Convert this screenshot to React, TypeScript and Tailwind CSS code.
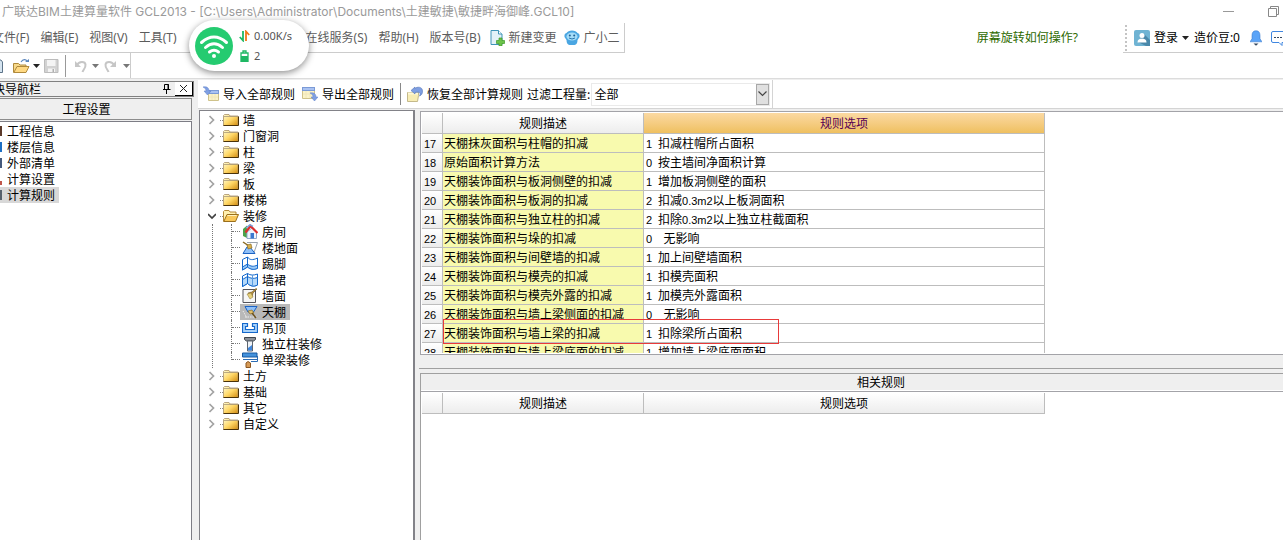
import { useState } from 'react';
import type { ReactNode } from 'react';
import clsx from 'clsx';

const TITLE_FONT = "font-['Inter','Noto_Sans_CJK_SC',sans-serif]";
const UI_FONT = "font-['Noto_Sans','Noto_Sans_CJK_SC',sans-serif]";
const GRID_FONT = "font-['Noto_Sans_CJK_SC',sans-serif]";

const navItems = ['工程信息', '楼层信息', '外部清单', '计算设置', '计算规则'];
const navColors = ['#5b3a2a', '#1d6fc4', '#44597c', '#c0564a', '#56606c'];

const topNodes = ['墙', '门窗洞', '柱', '梁', '板', '楼梯'];
const bottomNodes = ['土方', '基础', '其它', '自定义'];
const finishNodes = ['房间', '楼地面', '踢脚', '墙裙', '墙面', '天棚', '吊顶', '独立柱装修', '单梁装修'];

const rules = [
  { no: 17, name: '天棚抹灰面积与柱帽的扣减', code: 1, option: '扣减柱帽所占面积' },
  { no: 18, name: '原始面积计算方法', code: 0, option: '按主墙间净面积计算' },
  { no: 19, name: '天棚装饰面积与板洞侧壁的扣减', code: 1, option: '增加板洞侧壁的面积' },
  { no: 20, name: '天棚装饰面积与板洞的扣减', code: 2, option: '扣减0.3m2以上板洞面积' },
  { no: 21, name: '天棚装饰面积与独立柱的扣减', code: 2, option: '扣除0.3m2以上独立柱截面积' },
  { no: 22, name: '天棚装饰面积与垛的扣减', code: 0, option: '  无影响' },
  { no: 23, name: '天棚装饰面积与间壁墙的扣减', code: 1, option: '加上间壁墙面积' },
  { no: 24, name: '天棚装饰面积与模壳的扣减', code: 1, option: '扣模壳面积' },
  { no: 25, name: '天棚装饰面积与模壳外露的扣减', code: 1, option: '加模壳外露面积' },
  { no: 26, name: '天棚装饰面积与墙上梁侧面的扣减', code: 0, option: '  无影响' },
  { no: 27, name: '天棚装饰面积与墙上梁的扣减', code: 1, option: '扣除梁所占面积' },
  { no: 28, name: '天棚装饰面积与墙上梁底面的扣减', code: 1, option: '增加墙上梁底面面积' },
];

/* ── Icons ─────────────────────────────────────────────────────────── */

function Icon({ children, w = 16 }: { children: ReactNode; w?: number }) {
  return (
    <svg width={w} height={16} viewBox={`0 0 ${w} 16`} className="shrink-0" aria-hidden="true">
      {children}
    </svg>
  );
}

function Caret({ color = '#222' }: { color?: string }) {
  return (
    <svg width="7" height="4" viewBox="0 0 7 4" className="shrink-0" aria-hidden="true">
      <path d="M0 0h7L3.5 4z" fill={color} />
    </svg>
  );
}

function FolderIcon() {
  return (
    <Icon>
      <defs>
        <linearGradient id="folder" x1="0" y1="0" x2="1" y2="1">
          <stop offset="0" stopColor="#fffbd0" />
          <stop offset="0.5" stopColor="#ffd766" />
          <stop offset="1" stopColor="#d08a10" />
        </linearGradient>
      </defs>
      <path d="M.5 13.500v-10l1-1H6l1 1.500h8v9.500z" fill="url(#folder)" stroke="#a8916a" strokeWidth="0.800" />
      <path d="M.5 13.500h15V4.500" fill="none" stroke="#4a3208" />
      <path d="M1 4.500h14" fill="none" stroke="#a89878" strokeWidth="0.800" />
    </Icon>
  );
}

function OpenFolderIcon() {
  return (
    <Icon>
      <path d="M.5 13.500v-10l1-1H6l1 1.500h6v3" fill="#fff0b0" stroke="#b5893a" />
      <path d="M.8 13.500 4 6.500h11.500l-3 7z" fill="#f8c75a" stroke="#9a6f1c" />
      <path d="M4.500 7.500h9" stroke="#fff2bf" />
    </Icon>
  );
}

function ChevronIcon() {
  return (
    <svg width="8" height="10" viewBox="0 0 8 10" className="shrink-0" aria-hidden="true">
      <path d="M1.500 1 5.500 5l-4 4" fill="none" stroke="#a3a3a3" strokeWidth="1.700" />
    </svg>
  );
}

function ChevronDownIcon() {
  return (
    <svg width="8" height="10" viewBox="0 0 8 10" className="shrink-0" aria-hidden="true">
      <path d="M0 3l4 4 4-4" fill="none" stroke="#404040" strokeWidth="1.700" />
    </svg>
  );
}

function ImportIcon() {
  return (
    <Icon>
      <path d="M5.500 7.500h10v7h-10z" fill="#fbf3c8" stroke="#cfc28a" />
      <path d="M9 8v6M12 8v6M6 11h9" stroke="#f0e6ba" />
      <rect x="6" y="4.500" width="9.500" height="3" fill="#a9c2f2" stroke="#7b9ad6" />
      <path d="M0 1c4-1 6 1 6 4h2L4.500 9 1 5h2C3 3 2 2 0 1z" fill="#7f9fe2" stroke="#5f80c8" strokeWidth="0.500" />
    </Icon>
  );
}

function ExportIcon() {
  return (
    <Icon>
      <path d="M.5 4.500h12v8H.5z" fill="#fbf3c8" stroke="#cfc28a" />
      <path d="M4 5v7M8 5v7M1 8h11" stroke="#f0e6ba" />
      <rect x=".5" y="1.500" width="12" height="3" fill="#a9c2f2" stroke="#7b9ad6" />
      <path d="M8 7c4-1 6 1 6 4h2l-3.500 4L9 11h2c0-2-1-3-3-4z" fill="#7f9fe2" stroke="#5f80c8" strokeWidth="0.500" />
    </Icon>
  );
}

function RestoreIcon() {
  return (
    <Icon>
      <path d="M.5 6.500h11v3l-1 6h-10z" fill="#f8edb4" stroke="#c4b98a" />
      <path d="M1 7.500h10" stroke="#fff8d8" strokeWidth="2" />
      <path d="M4 4.500 8 1v1.500c2-2 7.500-2 7.500 2.500 0 3-1 4-3 5 1.500-3 .500-4.500-4.500-3.500V8z" fill="#7f9fe2" stroke="#5373b8" strokeWidth="0.600" />
    </Icon>
  );
}

function NewDocIcon() {
  return (
    <Icon w={15}>
      <path d="M1 .5h7.500L12 4v10.500H1z" fill="#e2f1f8" stroke="#3e94b8" />
      <path d="M8.500.5V4H12" fill="#fff" stroke="#3e94b8" />
      <path d="M9 8h3v2.500h2.500v3H12V16H9v-2.500H6.500v-3H9z" fill="#6cc24a" stroke="#3c9a28" strokeWidth="0.700" />
    </Icon>
  );
}

function MascotIcon() {
  return (
    <Icon>
      <path d="M2.500 3Q4 .5 8 .5T13.500 3Q16 3.500 15.500 7L13.500 10q0 4.500-3 5h-5q-3-.500-3-5L.5 7Q0 3.500 2.500 3z" fill="#4aa6e2" />
      <ellipse cx="8" cy="6.500" rx="5.500" ry="4" fill="#a4dcf8" />
      <circle cx="5.800" cy="5.500" r="1" fill="#1d5f94" />
      <circle cx="10.200" cy="5.500" r="1" fill="#1d5f94" />
      <path d="M5 8q3 2 6 0" fill="none" stroke="#2877ae" />
    </Icon>
  );
}

function UserIcon() {
  return (
    <Icon>
      <rect width="16" height="16" rx="2" fill="#6fb3d3" />
      <path d="M10 4l6 6v6h-4l-8-4z" fill="#4a88aa" />
      <circle cx="8" cy="5.500" r="2.500" fill="#fff" />
      <path d="M3.500 12.500c0-3 2-4 4.500-4s4.500 1 4.500 4z" fill="#fff" />
    </Icon>
  );
}

function UndoIcon({ flip = false }: { flip?: boolean }) {
  return (
    <svg width="14" height="14" viewBox="0 0 14 14" className={clsx('shrink-0', flip && '-scale-x-100')} aria-hidden="true">
      <path d="M3 6c2-4 8-4 8.500-.5S9 11 8.500 13" fill="none" stroke="#c6c6c6" strokeWidth="2" />
      <path d="M1 2v6h6z" fill="#c6c6c6" />
    </svg>
  );
}

const finishIcons: Record<string, ReactNode> = {
  房间: (
    <Icon>
      <path d="M1 5l4-3.500V14l-4-2z" fill="#4ba24a" />
      <path d="M5 8l5-4 4.500 4v6.500H5z" fill="#eef4fc" stroke="#8fa8cc" />
      <path d="M3.500 8.500 8.500 2l7 7" fill="none" stroke="#dd3030" strokeWidth="2.200" />
      <path d="M4 4 8 .8l3 1.500" fill="none" stroke="#7a9fd8" strokeWidth="1.500" />
      <rect x="8.500" y="9" width="3.500" height="5.500" fill="#3a79d0" />
    </Icon>
  ),
  楼地面: (
    <Icon>
      <path d="M5 2.500h10.500L12 12.500" fill="none" stroke="#9aa3ad" />
      <path d="M1 13.500 5 7h3l5 6.500z" fill="#8fc0f8" stroke="#1c63c4" />
      <path d="M1 2l6 4" stroke="#8a6a22" strokeWidth="1.500" />
      <path d="M5 5l4-1 1 4-4 1z" fill="#d8b04c" stroke="#806018" strokeWidth="0.600" />
    </Icon>
  ),
  踢脚: (
    <Icon>
      <path d="M.5 3.500 5.500 1v10l-5 3zM5.500 1c2 3 5 3.500 10 1v10c-4 2-7 1-10-1" fill="#fff" stroke="#1468cc" />
      <path d="M.5 11 5.500 8v3l-5 3zM5.500 8c3 2.500 6 3 10 1v3.500c-4 1.500-7 1-10-1.500z" fill="#9ccbf8" stroke="#1468cc" />
    </Icon>
  ),
  墙裙: (
    <Icon>
      <path d="M.5 4 5.500 1.500v10l-5 3zM5.500 1.500c3 2 6 2 10 .5v11c-4 2-7 1-10-1.500" fill="#fff" stroke="#1468cc" />
      <path d="M.5 7.500l5-3v7l-5 3zM5.500 4.500c3 2 6 2.500 10 1V13c-4 2-7 1-10-1.500z" fill="#b5d9fa" stroke="#1468cc" />
      <path d="M10.500 3v11" stroke="#5a9be0" />
    </Icon>
  ),
  墙面: (
    <Icon>
      <path d="M1 1.500h12.500v13H1z" fill="#f6f6f6" stroke="#54545c" />
      <path d="M6 5l4 4 1-4 4-4-1-.500-4 3.500z" fill="#b58f40" stroke="#6e5420" strokeWidth="0.600" />
      <path d="M5 6l3 5 3-2-2-4z" fill="#e6d07c" stroke="#8c7430" strokeWidth="0.500" />
    </Icon>
  ),
  天棚: (
    <Icon>
      <path d="M1 7 5 14M3 13h12" stroke="#eee" strokeDasharray="1.500 1" />
      <path d="M3 2.500h12L11.500 8H6z" fill="#8fc0f8" stroke="#1c63c4" />
      <path d="M6 7l4-1 2 3-4 1z" fill="#e0bf6c" stroke="#806018" strokeWidth="0.600" />
      <path d="M10 9l4 5" stroke="#6e5420" strokeWidth="1.500" />
    </Icon>
  ),
  吊顶: (
    <Icon>
      <path d="M.5 3.500h5v3h-2v3h9v-3h-2v-3h5v9H.5z" fill="#a8d2fa" stroke="#1468cc" strokeWidth="1.200" />
    </Icon>
  ),
  独立柱装修: (
    <Icon>
      <path d="M2.500 1.500h11v2l-2 1.500h-7l-2-1.500z" fill="#8a9098" stroke="#3e444c" />
      <path d="M5.500 5h5v10h-5z" fill="#eef2f6" stroke="#5e6670" />
      <path d="M6 12l4-3v5.500H6z" fill="#3f86dc" />
    </Icon>
  ),
  单梁装修: (
    <Icon>
      <path d="M.5 1h14.500v4H.5z" fill="#4492dc" stroke="#1758a0" />
      <path d="M1 7.500h14M9 9.500h6.500V4" fill="none" stroke="#2b6cb4" />
      <path d="M4 11l2-1.500 2.500 1.500v4.500H4z" fill="#d69a55" stroke="#8a5520" />
    </Icon>
  ),
};

/* ── Top bars ──────────────────────────────────────────────────────── */

function TitleBar() {
  return (
    <header className="flex h-[23px] items-center justify-between pl-0.5 text-[#9a9a9a]">
      <h1 className={clsx('text-xs whitespace-nowrap', TITLE_FONT)}>
        广联达BIM土建算量软件 GCL2013 - [C:\Users\Administrator\Documents\土建敏捷\敏捷畔海御峰.GCL10]
      </h1>
      <div className="flex items-center gap-[34px] pr-1">
        <button type="button" aria-label="最小化" className="h-px w-[11px] bg-[#999]" />
        <button type="button" aria-label="还原">
          <svg width="11" height="11" viewBox="0 0 11 11" fill="none" stroke="#888">
            <path d="M.5 2.500h8v8h-8zM2.500 2V.5h8v8H9" />
          </svg>
        </button>
      </div>
    </header>
  );
}

function MenuBar() {
  return (
    <div className="flex h-[30px] text-xs whitespace-nowrap text-[#5c5c5c]">
      <nav className="flex items-center gap-[11px] border-r border-b border-[#ccc] pr-1">
        <button type="button" className="-ml-2">文件(F)</button>
        <button type="button">编辑(E)</button>
        <button type="button">视图(V)</button>
        <button type="button">工具(T)</button>
        <button type="button" className="ml-[118px]">在线服务(S)</button>
        <button type="button">帮助(H)</button>
        <button type="button">版本号(B)</button>
        <button type="button" className="-ml-0.5 flex items-center gap-1">
          <NewDocIcon />
          新建变更
        </button>
        <button type="button" className="-ml-1 flex items-center gap-1">
          <MascotIcon />
          广小二
        </button>
      </nav>
      <a href="#rotate" className="mr-[45px] ml-auto self-center text-[#2d6a00]">
        屏幕旋转如何操作?
      </a>
      <div className="flex items-center border-b border-[#ccc] pl-0.5 text-black">
        <span className="mr-[7px] h-[26px] border-l-2 border-dotted border-[#c4c4c4]" />
        <button type="button" className="flex items-center gap-1">
          <UserIcon />
          登录
          <Caret />
        </button>
        <span className="ml-[5px]">造价豆:0</span>
        <button type="button" aria-label="通知" className="ml-[10px]">
          <svg width="12" height="16" viewBox="0 0 12 16">
            <path d="M6 .8c3 0 4 2 4 5v3l2 3H0l2-3v-3c0-3 1-5 4-5z" fill="#5ba4f8" stroke="#3f7fd0" strokeWidth="0.600" />
            <path d="M3.500 13.500h5L6 15.800z" fill="#34475e" />
          </svg>
        </button>
        <button type="button" aria-label="消息" className="ml-[9px]">
          <svg width="12" height="16" viewBox="0 0 12 16" fill="none" stroke="#3f86e0">
            <path d="M12 1.500H2q-1.500 0-1.500 1.500v8q0 1.500 1.500 1.500h6l3 3v-3h1" />
            <path d="M3 7.500h9" stroke="#34475e" strokeDasharray="2 1" />
          </svg>
        </button>
      </div>
    </div>
  );
}

function FileToolbar() {
  return (
    <div className="flex h-[26px] border-b border-[#dcdcdc]">
      <div className="flex items-center border-r border-[#ccc]">
        <button type="button" aria-label="新建" className="mr-2.5">
          <svg width="3" height="14" viewBox="0 0 3 14">
            <path d="M0 1h1l1.500 2v10.500H0" fill="#d5e4f0" stroke="#5c7388" />
          </svg>
        </button>
        <button type="button" aria-label="打开" className="flex items-center gap-[3px]">
          <svg width="17" height="16" viewBox="0 0 17 16">
            <path d="M.5 14.500v-9h5l1.500 1.500h6v3" fill="#f7d98a" stroke="#b08a3c" />
            <path d="M.8 14.500 4 8.500h12l-3 6z" fill="#ffd983" stroke="#b08a3c" />
            <path d="M8 4c2-3 5-3 6-.500" fill="none" stroke="#5a86bd" strokeWidth="1.200" />
            <path d="M12 4h4V1z" fill="#5a86bd" />
          </svg>
          <Caret />
        </button>
        <button type="button" aria-label="保存" className="ml-1">
          <svg width="15" height="14" viewBox="0 0 15 14">
            <path d="M.5.5h13.500v13H.5z" fill="#d2d2d2" stroke="#bcbcbc" />
            <path d="M3 1h8.500v6H3zM4 9.500h7V13H4z" fill="#f4f4f4" />
            <path d="M8.500 10h1.500v3H8.500z" fill="#b0b0b0" />
          </svg>
        </button>
        <span className="ml-1.5 h-[22px] w-px bg-[#999]" />
        <button type="button" aria-label="撤销" className="ml-2 flex items-center gap-1">
          <UndoIcon />
          <Caret color="#777" />
        </button>
        <button type="button" aria-label="恢复" className="ml-1 flex items-center gap-1.5">
          <UndoIcon flip />
          <Caret color="#777" />
        </button>
      </div>
    </div>
  );
}

// Floating network-speed widget that sits over the menu
function NetWidget() {
  return (
    <div className="absolute top-5 left-[189px] flex h-[51px] w-[120px] items-center gap-1.5 rounded-full bg-white pl-1.5 text-[11px] leading-5 text-[#555] shadow-[0_2px_7px_rgba(0,0,0,0.45)]">
      <svg width="38" height="38" viewBox="0 0 38 38" className="shrink-0">
        <circle cx="19" cy="19" r="19" fill="#25cb70" />
        <g fill="none" stroke="#fff" strokeWidth="3" strokeLinecap="round">
          <path d="M6.500 15.500q12.500-11 25 0" />
          <path d="M10.500 20.500q8.500-7.500 17 0" />
          <path d="M14.500 25q4.500-3.500 9 0" />
        </g>
        <circle cx="19" cy="29" r="2" fill="#fff" />
      </svg>
      <div>
        <p className="flex items-center gap-1">
          <svg width="11" height="12" viewBox="0 0 11 12" fill="none" strokeWidth="1.800">
            <path d="M4 1v9.500L.8 7" stroke="#1fb864" />
            <path d="M7 11V1.500L10.200 5" stroke="#f07818" />
          </svg>
          0.00K/s
        </p>
        <p className="flex items-center gap-1">
          <svg width="11" height="12" viewBox="0 0 11 12">
            <path d="M2 3h7v8.500H2zM4 1h3v2H4z" fill="#fff" stroke="#1fb864" strokeWidth="1.300" />
            <path d="M2 6h7v5.500H2z" fill="#1fb864" />
          </svg>
          2
        </p>
      </div>
    </div>
  );
}

/* ── Left navigation ───────────────────────────────────────────────── */

function NavPanel() {
  const [active, setActive] = useState('计算规则');
  return (
    <aside className="flex w-[198px] shrink-0 flex-col bg-[#efefef] pt-0.5 pr-1">
      <div className="flex h-4 items-center justify-between border-y border-r border-[#808080] leading-none whitespace-nowrap">
        <span className="-ml-[7px]">块导航栏</span>
        <span className="flex h-full items-center gap-1">
          <button type="button" aria-label="固定">
            <svg width="8" height="10" viewBox="0 0 8 10" fill="none" stroke="#000">
              <path d="M1.500 5.500v-5h4v5M5 0v5.500M0 5.500h7.500M3.500 6v4" />
            </svg>
          </button>
          <button type="button" aria-label="关闭" className="flex h-full w-[18px] items-center justify-center border-r border-b border-black bg-white">
            <svg width="9" height="9" viewBox="0 0 9 9" stroke="#222">
              <path d="M1 1l7 7M8 1 1 8" />
            </svg>
          </button>
        </span>
      </div>
      <h2 className="mt-px mr-0.5 flex h-[22px] items-center justify-center border-y border-r border-[#8c8c8c] pr-[18px]">
        工程设置
      </h2>
      <ul className="mt-px mr-0.5 flex-1 border-t border-r border-[#7d7d85] bg-white pt-px">
        {navItems.map((item, i) => (
          <li key={item}>
            <button
              type="button"
              onClick={() => setActive(item)}
              className={clsx('flex h-4 items-center gap-[5px] pr-1', item === active && 'bg-[#d8d8d8]')}
            >
              <svg width="2" height="12" aria-hidden="true">
                <rect y={i === 3 ? 8 : 1} width="2" height={i === 3 ? 4 : 10} fill={navColors[i]} />
              </svg>
              {item}
            </button>
          </li>
        ))}
      </ul>
    </aside>
  );
}

/* ── Rule toolbar + tree ───────────────────────────────────────────── */

function RuleToolbar() {
  return (
    <div className="flex border-b border-[#d4d4d4] bg-white">
      <div className="flex h-7 items-center border-r border-[#d4d4d4] pr-0.5 pl-[5px] whitespace-nowrap">
        <button type="button" className="flex items-center gap-1">
          <ImportIcon />
          导入全部规则
        </button>
        <button type="button" className="ml-[7px] flex items-center gap-1">
          <ExportIcon />
          导出全部规则
        </button>
        <span className="mx-1.5 h-[22px] w-px bg-[#888]" />
        <button type="button" className="flex items-center gap-1">
          <RestoreIcon />
          恢复全部计算规则
        </button>
        <label htmlFor="filter" className="ml-1">过滤工程量:</label>
        <div className="relative ml-px">
          <select id="filter" className="h-[23px] w-[179px] appearance-none border border-[#eaeaea] bg-white pl-0.5">
            <option>全部</option>
          </select>
          <span className="pointer-events-none absolute top-px right-px flex h-[21px] w-[13px] items-center justify-center border border-[#a8a8a8] bg-[#e0e0e0]">
            <svg width="9" height="6" viewBox="0 0 9 6">
              <path d="M.5.5l4 4 4-4" fill="none" stroke="#444" strokeWidth="1.200" />
            </svg>
          </span>
        </div>
      </div>
    </div>
  );
}

function FolderRow({ label, open = false }: { label: string; open?: boolean }) {
  return (
    <button type="button" className="flex h-4 items-center pl-2">
      {open ? <ChevronDownIcon /> : <ChevronIcon />}
      <span className="ml-1 w-[3px] border-t border-dotted border-[#888]" />
      {open ? <OpenFolderIcon /> : <FolderIcon />}
      <span className="ml-1">{label}</span>
    </button>
  );
}

function RuleTree() {
  const [selected, setSelected] = useState('天棚');
  return (
    <ul className="w-[216px] shrink-0 overflow-hidden border-t border-r-2 border-l border-[#828288] bg-white pt-px whitespace-nowrap">
      {topNodes.map((label) => (
        <li key={label}>
          <FolderRow label={label} />
        </li>
      ))}
      <li>
        <FolderRow label="装修" open />
        <ul className="ml-3 border-l border-dotted border-[#777] pl-[18px]">
          {finishNodes.map((label, i) => (
            <li key={label} className="flex h-4">
              <span
                className={clsx(
                  'flex w-[9px] flex-col border-l border-dotted border-[#777]',
                  i === finishNodes.length - 1 ? 'h-2' : 'h-4',
                )}
              >
                <span className="h-2 border-b border-dotted border-[#777]" />
              </span>
              <button
                type="button"
                onClick={() => setSelected(label)}
                className={clsx('flex items-center gap-1 pr-1 pl-0.5', label === selected && 'bg-[#b9b9b9]')}
              >
                {finishIcons[label]}
                {label}
              </button>
            </li>
          ))}
        </ul>
      </li>
      {bottomNodes.map((label) => (
        <li key={label}>
          <FolderRow label={label} />
        </li>
      ))}
    </ul>
  );
}

/* ── Rule tables ───────────────────────────────────────────────────── */

// Half-width runs are set slightly smaller so they take half a Chinese character
function HalfWidth({ text }: { text: string }) {
  return text.split(/([0-9a-z.]+)/).map((part, i) =>
    i % 2 ? (
      <span key={i} className="font-['Liberation_Sans',sans-serif] text-[11px]">{part}</span>
    ) : (
      part
    ),
  );
}

function TableHead({ active = false }: { active?: boolean }) {
  const cell = 'border-r border-b border-[#bdbdbd] font-normal';
  return (
    <thead>
      <tr className="h-[21px] bg-linear-to-b from-white to-[#ececec]">
        <td className={clsx(cell, 'w-[21px]')} />
        <th className={clsx(cell, 'w-[201px]')}>规则描述</th>
        <th className={clsx(cell, 'w-[401px]', active && 'bg-linear-to-b from-[#fbd9a2] to-[#efc05f] text-[#550055]')}>
          规则选项
        </th>
      </tr>
    </thead>
  );
}

const tableClass = 'w-[623px] table-fixed border-separate border-spacing-0 leading-4 whitespace-nowrap';

function RulesTable() {
  return (
    <section className="relative mt-px ml-px h-[244px] overflow-hidden border-y border-l border-[#a3a3a8] bg-white pt-px pb-px pl-px">
      <div className="h-full overflow-hidden">
        <table className={tableClass}>
          <TableHead active />
          <tbody>
            {rules.map((rule) => (
              <tr key={rule.no} className="h-[19px]">
                <td className="border-r border-b border-[#bdbdbd] bg-linear-to-b from-white to-[#ececec] pl-0.5">
                  <HalfWidth text={String(rule.no)} />
                </td>
                <td className="border-r border-b border-[#bdbdbd] bg-[#f8faae] pl-px">{rule.name}</td>
                <td className="border-r border-b border-[#bdbdbd] pl-0.5">
                  <div className="flex whitespace-pre">
                    <span className="w-3">
                      <HalfWidth text={String(rule.code)} />
                    </span>
                    <span>
                      <HalfWidth text={rule.option} />
                    </span>
                  </div>
                </td>
              </tr>
            ))}
          </tbody>
        </table>
      </div>
      {/* marker over row 27 */}
      <div className="absolute top-[207px] left-[22px] h-[25px] w-[336px] border border-[#e83a3a]" />
    </section>
  );
}

function RelatedRules() {
  return (
    <section className="ml-px flex flex-1 flex-col border-t border-l border-[#a0a0a0]">
      <h2 className="flex h-[17px] items-center justify-center border-b border-white bg-[#efefef] pl-[58px]">
        相关规则
      </h2>
      <div className="flex-1 border-t border-[#a3a3a8] bg-white pt-px pl-px">
        <table className={tableClass}>
          <TableHead />
        </table>
      </div>
    </section>
  );
}

export default function App() {
  return (
    <div className={clsx('relative flex h-screen flex-col overflow-hidden bg-white text-xs text-black', UI_FONT)}>
      <TitleBar />
      <MenuBar />
      <FileToolbar />
      <main className={clsx('flex min-h-0 flex-1', GRID_FONT)}>
        <NavPanel />
        <div className="flex min-w-0 flex-1 flex-col bg-[#efefef] pt-px">
          <RuleToolbar />
          <div className="flex min-h-0 flex-1 pt-px pl-px">
            <RuleTree />
            <div className="flex min-w-0 flex-1 flex-col pl-1">
              <RulesTable />
              <div className="mt-[13px] mb-1 border-t border-[#a0a0a0]" />
              <RelatedRules />
            </div>
          </div>
        </div>
      </main>
      <NetWidget />
    </div>
  );
}
